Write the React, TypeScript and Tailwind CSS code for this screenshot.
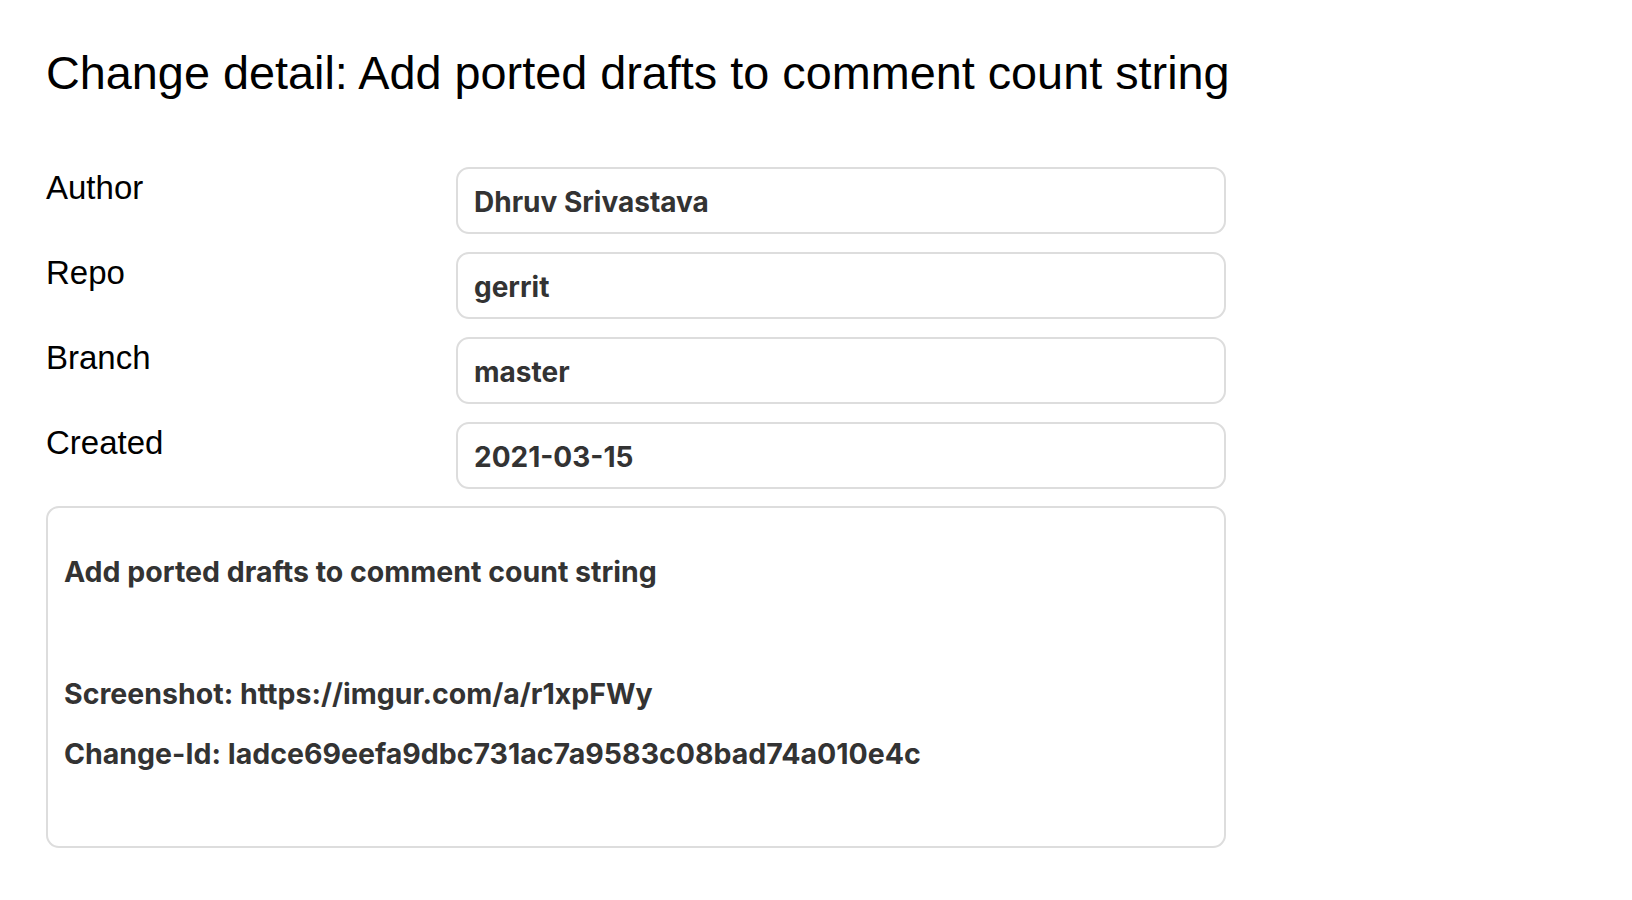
import React from 'react';

interface Field {
  label: string;
  value: string;
}

const fields: Field[] = [
  { label: 'Author', value: 'Dhruv Srivastava' },
  { label: 'Repo', value: 'gerrit' },
  { label: 'Branch', value: 'master' },
  { label: 'Created', value: '2021-03-15' },
];

export default function App() {
  return (
    <div className="min-h-screen bg-white px-[46px] pt-[46px] font-['Liberation_Sans',Arial,sans-serif] text-black">
      <h1 className="text-[46.8px] leading-[55px] font-normal">
        Change detail: Add ported drafts to comment count string
      </h1>

      <div className="mt-[66px] w-[1180px]">
        {/* Fields */}
        <div className="flex flex-col gap-[18px]">
          {fields.map((f) => (
            <div key={f.label} className="flex items-start">
              <div className="w-[410px] shrink-0 pt-[2px] text-[33px] leading-[38px]">{f.label}</div>
              <div className="flex h-[67px] flex-1 items-center rounded-[13px] border-2 border-[#dddddd] px-[16px] pt-[3px] font-['Inter',sans-serif] text-[28px] font-bold text-[#333333]">
                {f.value}
              </div>
            </div>
          ))}
        </div>

        {/* Commit message */}
        <div className="mt-[17px] rounded-[13px] border-2 border-[#dddddd] px-[16px] pt-[49px] pb-[77px] font-['Inter',sans-serif] text-[28.5px] font-bold leading-[30px] text-[#333333]">
          <p>Add ported drafts to comment count string</p>
          <p className="mt-[92px]">Screenshot: https://imgur.com/a/r1xpFWy</p>
          <p className="mt-[30px]">Change-Id: Iadce69eefa9dbc731ac7a9583c08bad74a010e4c</p>
        </div>
      </div>
    </div>
  );
}
